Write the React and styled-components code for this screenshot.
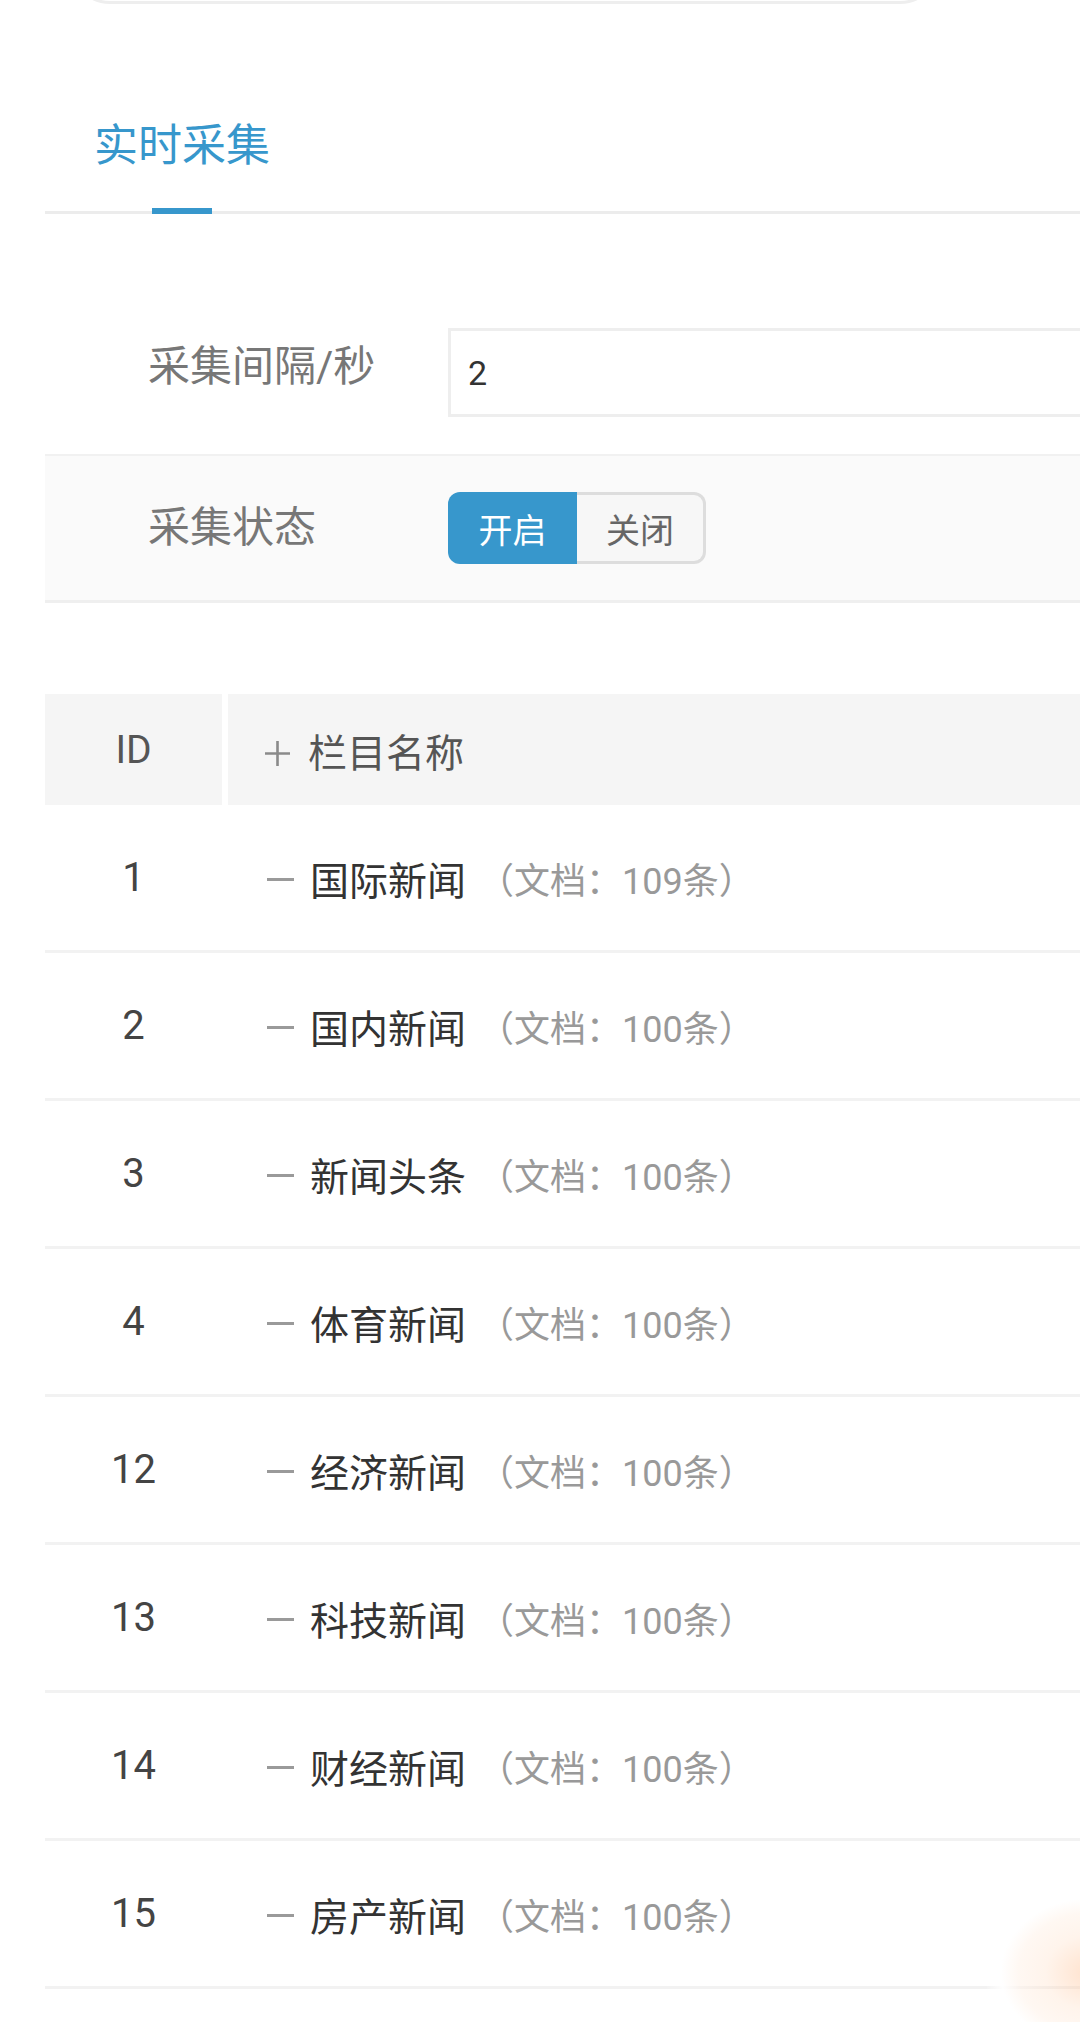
import React from "react";
import styled, { createGlobalStyle } from "styled-components";

const GlobalStyle = createGlobalStyle`
  html, body {
    margin: 0;
    padding: 0;
    background: #ffffff;
    overflow: hidden;
  }
  body {
    font-family: Roboto, "Noto Sans CJK SC", "Noto Sans", sans-serif;
    color: #333333;
  }
  * { box-sizing: border-box; }
`;

const Page = styled.div`
  display: flow-root;
  position: relative;
  width: 1240px;
  height: 2022px;
  padding-left: 45px;
`;

const SearchStub = styled.div`
  margin-top: -76px;
  margin-left: 25px;
  width: 870px;
  height: 80px;
  border: 3px solid #eeeeee;
  border-radius: 40px;
  background: #ffffff;
`;

const TabBar = styled.div`
  display: flex;
  margin-top: 120px;
  border-bottom: 3px solid #ececec;
`;

const Tab = styled.div`
  position: relative;
  margin-left: 49px;
  padding-bottom: 43px;
  font-size: 44px;
  line-height: 44px;
  color: ${(p) => (p.$active ? "#3797cc" : "#666")};

  &::after {
    content: "";
    display: ${(p) => (p.$active ? "block" : "none")};
    position: absolute;
    left: 50%;
    bottom: -3px;
    width: 60px;
    height: 6px;
    margin-left: -30px;
    background: #3797cc;
  }
`;

const Form = styled.div`
  margin-top: 114px;
`;

const FormRow = styled.div`
  display: flex;
  align-items: ${(p) => (p.$center ? "center" : "flex-start")};
  height: ${(p) => (p.$shaded ? "149px" : "auto")};
  margin-top: ${(p) => (p.$shaded ? "37px" : "0")};
  background: ${(p) => (p.$shaded ? "#fafafa" : "transparent")};
  border-top: ${(p) => (p.$shaded ? "2px solid #f1f1f1" : "none")};
  border-bottom: ${(p) => (p.$shaded ? "3px solid #efefef" : "none")};
`;

const Label = styled.div`
  flex: 0 0 403px;
  padding-left: 103px;
  padding-top: ${(p) => (p.$top ? "18px" : "0")};
  font-size: 42px;
  line-height: 42px;
  color: #777777;
  white-space: nowrap;
`;

const TextInput = styled.input`
  flex: 1;
  height: 89px;
  padding: 0 17px;
  border: 3px solid #eeeeee;
  background: #ffffff;
  font-family: inherit;
  font-size: 34px;
  color: #333333;
  outline: none;
`;

const ToggleGroup = styled.div`
  display: flex;
  height: 72px;
`;

const ToggleButton = styled.div`
  display: flex;
  align-items: center;
  justify-content: center;
  width: 129px;
  height: 72px;
  font-size: 34px;
  color: ${(p) => (p.$on ? "#ffffff" : "#666666")};
  background: ${(p) => (p.$on ? "#3797cc" : "#f7f7f7")};
  border: ${(p) => (p.$on ? "none" : "3px solid #dddddd")};
  border-left: none;
  border-radius: ${(p) => (p.$first ? "12px 0 0 12px" : "0 12px 12px 0")};
`;

const Table = styled.div`
  margin-top: 91px;
`;

const Grid = styled.div`
  display: grid;
  grid-template-columns: 177px 1fr;
  column-gap: 6px;
`;

const HeadCell = styled.div`
  display: flex;
  align-items: center;
  justify-content: ${(p) => (p.$center ? "center" : "flex-start")};
  height: 111px;
  padding-left: ${(p) => (p.$center ? "0" : "35px")};
  background: #f5f5f5;
  font-size: 39px;
  color: #555555;
`;

const PlusIcon = styled.svg`
  width: 29px;
  height: 29px;
  margin-right: 16px;
  margin-top: 8px;
`;

const Row = styled(Grid)`
  height: 148px;
  border-bottom: 3px solid #f2f2f2;
`;

const IdCell = styled.div`
  display: flex;
  align-items: center;
  justify-content: center;
  font-size: 40px;
  color: #444444;
`;

const NameCell = styled.div`
  display: flex;
  align-items: center;
  padding-left: 39px;
`;

const Dash = styled.span`
  display: block;
  width: 27px;
  height: 3px;
  margin-right: 16px;
  margin-top: 4px;
  background: #9a9a9a;
`;

const Name = styled.span`
  font-size: 39px;
  color: #333333;
`;

const Count = styled.span`
  margin-left: 12px;
  font-size: 36px;
  color: #999999;
`;

const FloatGlow = styled.div`
  position: absolute;
  left: 985px;
  top: 1885px;
  width: 210px;
  height: 175px;
  border-radius: 50%;
  background: radial-gradient(
    ellipse at 50% 50%,
    rgba(255, 185, 135, 0.42) 0%,
    rgba(255, 215, 185, 0.28) 30%,
    rgba(255, 242, 232, 0.55) 48%,
    rgba(255, 255, 255, 0.95) 60%,
    rgba(255, 255, 255, 0) 72%
  );
  pointer-events: none;
`;

const columns = [
  { id: 1, name: "国际新闻", count: 109 },
  { id: 2, name: "国内新闻", count: 100 },
  { id: 3, name: "新闻头条", count: 100 },
  { id: 4, name: "体育新闻", count: 100 },
  { id: 12, name: "经济新闻", count: 100 },
  { id: 13, name: "科技新闻", count: 100 },
  { id: 14, name: "财经新闻", count: 100 },
  { id: 15, name: "房产新闻", count: 100 },
];

export default function App() {
  return (
    <>
      <GlobalStyle />
      <Page>
        <SearchStub />
        <TabBar>
          <Tab $active>实时采集</Tab>
        </TabBar>

        <Form>
          <FormRow>
            <Label $top>采集间隔/秒</Label>
            <TextInput defaultValue="2" />
          </FormRow>
          <FormRow $shaded $center>
            <Label>采集状态</Label>
            <ToggleGroup>
              <ToggleButton $on $first>开启</ToggleButton>
              <ToggleButton>关闭</ToggleButton>
            </ToggleGroup>
          </FormRow>
        </Form>

        <Table>
          <Grid>
            <HeadCell $center>ID</HeadCell>
            <HeadCell>
              <PlusIcon viewBox="0 0 29 29">
                <path d="M14.5 2 V27 M2 14.5 H27" stroke="#8a8a8a" strokeWidth="2.6" fill="none" />
              </PlusIcon>
              栏目名称
            </HeadCell>
          </Grid>
          {columns.map((c) => (
            <Row key={c.id}>
              <IdCell>{c.id}</IdCell>
              <NameCell>
                <Dash />
                <Name>{c.name}</Name>
                <Count>（文档：{c.count}条）</Count>
              </NameCell>
            </Row>
          ))}
        </Table>

        <FloatGlow />
      </Page>
    </>
  );
}
